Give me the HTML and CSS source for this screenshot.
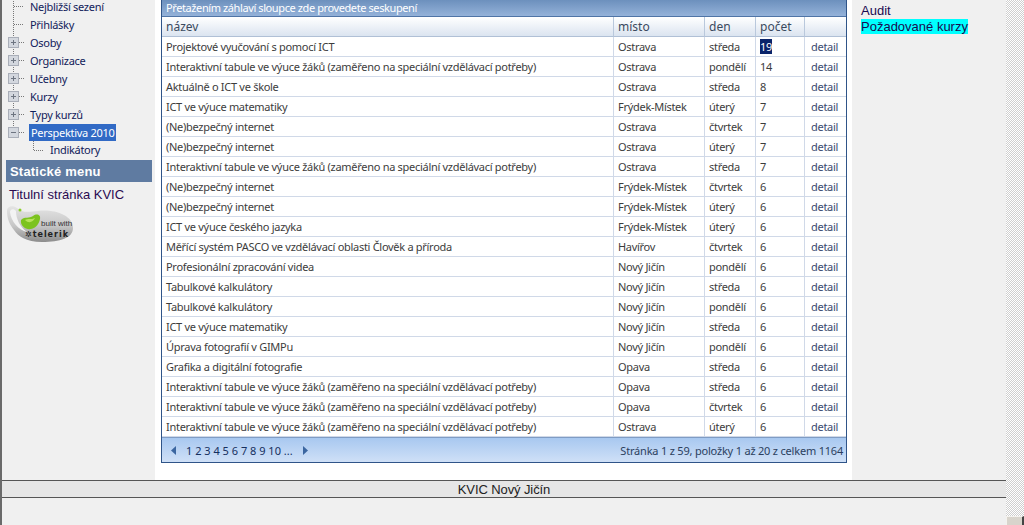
FILE: index.html
```html
<!DOCTYPE html>
<html lang="cs">
  <head>
    <meta charset="UTF-8" />
    <meta name="viewport" content="width=device-width, initial-scale=1.0" />
    <title>KVIC Nový Jičín</title>
    <link rel="stylesheet" href="styles.css">
  </head>
  <body>
    <div class="page">
      <div class="content">
        <div class="columns">
          <div class="sidebar">
            <ul class="tree">
              <li><svg class="joint" width="30" height="18"><path class="dots" d="M13.5 0V18M14 9.5H24"/></svg>Nejbližší sezení</li>
              <li><svg class="joint" width="30" height="18"><path class="dots" d="M13.5 0V18M14 9.5H24"/></svg>Přihlášky</li>
              <li><svg class="joint" width="30" height="18"><path class="dots" d="M13.5 0V18M19 9.5H24"/><rect class="box" x="8.5" y="4.5" width="10" height="10"/><path class="sign" d="M11 9.5H16M13.5 7V12"/></svg>Osoby</li>
              <li><svg class="joint" width="30" height="18"><path class="dots" d="M13.5 0V18M19 9.5H24"/><rect class="box" x="8.5" y="4.5" width="10" height="10"/><path class="sign" d="M11 9.5H16M13.5 7V12"/></svg>Organizace</li>
              <li><svg class="joint" width="30" height="18"><path class="dots" d="M13.5 0V18M19 9.5H24"/><rect class="box" x="8.5" y="4.5" width="10" height="10"/><path class="sign" d="M11 9.5H16M13.5 7V12"/></svg>Učebny</li>
              <li><svg class="joint" width="30" height="18"><path class="dots" d="M13.5 0V18M19 9.5H24"/><rect class="box" x="8.5" y="4.5" width="10" height="10"/><path class="sign" d="M11 9.5H16M13.5 7V12"/></svg>Kurzy</li>
              <li><svg class="joint" width="30" height="18"><path class="dots" d="M13.5 0V18M19 9.5H24"/><rect class="box" x="8.5" y="4.5" width="10" height="10"/><path class="sign" d="M11 9.5H16M13.5 7V12"/></svg>Typy kurzů</li>
              <li><svg class="joint" width="30" height="18"><path class="dots" d="M13.5 0V5M19 9.5H24"/><rect class="box" x="8.5" y="4.5" width="10" height="10"/><path class="sign" d="M11 9.5H16"/></svg><span class="selected">Perspektiva 2010</span></li>
              <li class="child"><svg class="joint" width="50" height="18"><path class="dots" d="M33.5 0V9M34 9.5H44"/></svg>Indikátory</li>
            </ul>
            <div class="menu-title">Statické menu</div>
            <div class="menu-link">Titulní stránka KVIC</div>
            <svg class="telerik" width="70" height="38" viewBox="0 0 70 38">
              <defs>
                <linearGradient id="drop" x1="0" y1="0" x2="0" y2="1">
                  <stop offset="0" stop-color="#e4e4e4"/>
                  <stop offset="0.55" stop-color="#c6c6c6"/>
                  <stop offset="1" stop-color="#8c8c8c"/>
                </linearGradient>
              </defs>
              <path fill="url(#drop)" d="M1 6C1 1 7 0 11 3C16 8 22 7 32 6C48 4 67 10 67 23C67 33 54 37 36 37C20 37 12 31 8 25C4 20 1 14 1 6Z"/>
              <path fill="#f3f3f3" d="M4 7C4 4 8 3 10 6C10 14 14 22 21 27C13 25 5 17 4 7Z"/>
              <path fill="#7cc31f" d="M15 15C19 11 23 14 27 11C31 8 35 10 34 14C33 19 30 23 25 24C20 25 14 21 15 15Z"/>
              <path fill="#b7e35a" d="M19 15C22 13 25 15 29 13C27 17 23 19 19 15Z"/>
              <circle cx="14" cy="5" r="1.5" fill="#8ccf2a"/>
              <text class="built" x="35" y="21">built with</text>
              <text class="brand" x="19" y="32" textLength="43">✲telerik</text>
            </svg>
          </div>

          <div class="main">
            <div class="grid">
              <div class="group-bar">Přetažením záhlaví sloupce zde provedete seskupení</div>
              <table>
                <colgroup>
                  <col class="col-name" /><col class="col-place" /><col class="col-day" /><col class="col-count" /><col class="col-link" />
                </colgroup>
                <thead>
                  <tr><th>název</th><th>místo</th><th>den</th><th>počet</th><th></th></tr>
                </thead>
                <tbody>
                  <tr><td>Projektové vyučování s pomocí ICT</td><td>Ostrava</td><td>středa</td><td><span class="picked">19</span></td><td class="link">detail</td></tr>
                  <tr><td>Interaktivní tabule ve výuce žáků (zaměřeno na speciální vzdělávací potřeby)</td><td>Ostrava</td><td>pondělí</td><td>14</td><td class="link">detail</td></tr>
                  <tr><td>Aktuálně o ICT ve škole</td><td>Ostrava</td><td>středa</td><td>8</td><td class="link">detail</td></tr>
                  <tr><td>ICT ve výuce matematiky</td><td>Frýdek-Místek</td><td>úterý</td><td>7</td><td class="link">detail</td></tr>
                  <tr><td>(Ne)bezpečný internet</td><td>Ostrava</td><td>čtvrtek</td><td>7</td><td class="link">detail</td></tr>
                  <tr><td>(Ne)bezpečný internet</td><td>Ostrava</td><td>úterý</td><td>7</td><td class="link">detail</td></tr>
                  <tr><td>Interaktivní tabule ve výuce žáků (zaměřeno na speciální vzdělávací potřeby)</td><td>Ostrava</td><td>středa</td><td>7</td><td class="link">detail</td></tr>
                  <tr><td>(Ne)bezpečný internet</td><td>Frýdek-Místek</td><td>čtvrtek</td><td>6</td><td class="link">detail</td></tr>
                  <tr><td>(Ne)bezpečný internet</td><td>Frýdek-Místek</td><td>úterý</td><td>6</td><td class="link">detail</td></tr>
                  <tr><td>ICT ve výuce českého jazyka</td><td>Frýdek-Místek</td><td>úterý</td><td>6</td><td class="link">detail</td></tr>
                  <tr><td>Měřící systém PASCO ve vzdělávací oblasti Člověk a příroda</td><td>Havířov</td><td>čtvrtek</td><td>6</td><td class="link">detail</td></tr>
                  <tr><td>Profesionální zpracování videa</td><td>Nový Jičín</td><td>pondělí</td><td>6</td><td class="link">detail</td></tr>
                  <tr><td>Tabulkové kalkulátory</td><td>Nový Jičín</td><td>středa</td><td>6</td><td class="link">detail</td></tr>
                  <tr><td>Tabulkové kalkulátory</td><td>Nový Jičín</td><td>pondělí</td><td>6</td><td class="link">detail</td></tr>
                  <tr><td>ICT ve výuce matematiky</td><td>Nový Jičín</td><td>středa</td><td>6</td><td class="link">detail</td></tr>
                  <tr><td>Úprava fotografií v GIMPu</td><td>Nový Jičín</td><td>pondělí</td><td>6</td><td class="link">detail</td></tr>
                  <tr><td>Grafika a digitální fotografie</td><td>Opava</td><td>středa</td><td>6</td><td class="link">detail</td></tr>
                  <tr><td>Interaktivní tabule ve výuce žáků (zaměřeno na speciální vzdělávací potřeby)</td><td>Opava</td><td>středa</td><td>6</td><td class="link">detail</td></tr>
                  <tr><td>Interaktivní tabule ve výuce žáků (zaměřeno na speciální vzdělávací potřeby)</td><td>Opava</td><td>čtvrtek</td><td>6</td><td class="link">detail</td></tr>
                  <tr><td>Interaktivní tabule ve výuce žáků (zaměřeno na speciální vzdělávací potřeby)</td><td>Ostrava</td><td>úterý</td><td>6</td><td class="link">detail</td></tr>
                </tbody>
              </table>
              <div class="pager">
                <div class="pages">
                  <svg width="7" height="9"><path class="arrow" d="M6 0V9L1 4.5Z"/></svg>
                  <span class="numbers">1 2 3 4 5 6 7 8 9 10 ...</span>
                  <svg width="7" height="9"><path class="arrow" d="M1 0V9L6 4.5Z"/></svg>
                </div>
                <div class="info">Stránka 1 z 59, položky 1 až 20 z celkem 1164</div>
              </div>
            </div>
          </div>

          <div class="aside">
            <div>Audit</div>
            <div><span class="marked">Požadované kurzy</span></div>
          </div>
        </div>

        <div class="footer">KVIC Nový Jičín</div>
      </div>

      <div class="scrollbar"><div class="thumb"></div></div>
    </div>
  </body>
</html>
```

FILE: styles.css
```css
html,
body {
  margin: 0;
  height: 525px;
  overflow: hidden;
}

body {
  background: #f0f0f0;
  font-family: "Noto Sans", Tahoma, sans-serif;
  font-size: 11px;
  letter-spacing: -0.29px;
  color: #3c3c3c;
}

.page {
  display: flex;
  height: 525px;
}

.content {
  flex: 1;
  display: flex;
  flex-direction: column;
  border-left: 2px solid #6a6a6a;
  min-width: 0;
}

.columns {
  display: flex;
  height: 480px;
}

/* left tree */
.sidebar {
  width: 153px;
  flex: none;
}

.tree {
  list-style: none;
  margin: -3px 0 0;
  padding: 0;
  height: 163px;
  color: #10205a;
}

.tree li {
  display: flex;
  align-items: center;
  height: 18px;
  margin-left: -2px;
  white-space: nowrap;
}

.tree .child {
  height: 17px;
}

.joint {
  flex: none;
}

.dots {
  fill: none;
  stroke: #777;
  stroke-dasharray: 1 1;
}

.box {
  fill: #d3d7de;
  stroke: #a9aeb8;
}

.sign {
  fill: none;
  stroke: #6d7480;
}

.selected {
  background: #316ac5;
  color: #fff;
  padding: 1px 2px;
  margin-left: -1px;
}

.menu-title {
  margin: 0 0 0 4px;
  width: 146px;
  height: 22px;
  box-sizing: border-box;
  padding-left: 4px;
  line-height: 23px;
  background: #5f7ba1;
  color: #fff;
  font-family: "Liberation Sans", Arial, sans-serif;
  font-size: 13px;
  font-weight: bold;
  letter-spacing: 0.2px;
}

.menu-link {
  margin: 5px 0 0 7px;
  font-family: "Liberation Sans", Arial, sans-serif;
  font-size: 13px;
  letter-spacing: 0;
  line-height: 16px;
  color: #2a0a50;
  white-space: nowrap;
}

.telerik {
  display: block;
  margin: 2px 0 0 4px;
}

.built {
  font-family: "Liberation Sans", Arial, sans-serif;
  font-size: 8px;
  letter-spacing: 0;
  fill: #333;
}

.brand {
  font-family: "DejaVu Sans", sans-serif;
  font-size: 8px;
  font-weight: bold;
  letter-spacing: 0;
  fill: #222;
}

/* grid */
.main {
  width: 697px;
  flex: none;
  background: #fff;
  padding-left: 6px;
  box-sizing: border-box;
}

.grid {
  width: 686px;
  box-sizing: border-box;
  border: 1px solid #2f5488;
  border-top: none;
  height: 463px;
}

.group-bar {
  height: 16px;
  line-height: 15px;
  padding-left: 4px;
  background: linear-gradient(#6c90bd, #94b2d9);
  color: #fff;
  letter-spacing: -0.4px;
  border-bottom: 1px solid #4f74a6;
}

table {
  width: 684px;
  table-layout: fixed;
  border-collapse: separate;
  border-spacing: 0;
}

.col-name {
  width: 452px;
}

.col-place {
  width: 91px;
}

.col-day {
  width: 51px;
}

.col-count {
  width: 49px;
}

th {
  height: 20px;
  padding: 0 0 0 4px;
  box-sizing: border-box;
  text-align: left;
  font-weight: normal;
  font-size: 12px;
  letter-spacing: 0;
  color: #3a4a5e;
  background: linear-gradient(#fff, #dbe4f0);
  border-right: 1px solid #b9c8dc;
  border-bottom: 1px solid #b0c0d6;
}

td {
  height: 20px;
  padding: 0 0 0 4px;
  box-sizing: border-box;
  background: #fff;
  border-right: 1px solid #d0d9e8;
  border-bottom: 1px solid #d0d9e8;
  white-space: nowrap;
  overflow: hidden;
}

th:last-child,
td:last-child {
  border-right: none;
}

.link {
  padding-left: 6px;
  color: #3a4a70;
}

.picked {
  background: #0a246a;
  color: #fff;
}

.pager {
  display: flex;
  justify-content: space-between;
  align-items: center;
  height: 25px;
  padding: 0 3px 0 8px;
  background: linear-gradient(#a8c8f0, #cfe0f7);
  border-top: 1px solid #7f9cc4;
  box-sizing: border-box;
  color: #2c3f5e;
}

.pages {
  display: flex;
  align-items: center;
}

.numbers {
  margin: 0 9px 0 9px;
  letter-spacing: 0;
  color: #152f5e;
}

.info {
  letter-spacing: -0.2px;
}

.arrow {
  fill: #3b66a0;
}

/* right column */
.aside {
  flex: 1;
  padding: 3px 0 0 9px;
  font-family: "Liberation Sans", Arial, sans-serif;
  font-size: 13px;
  letter-spacing: 0;
  line-height: 16px;
  color: #1a0a50;
}

.marked {
  background: #00ffff;
}

.footer {
  flex: none;
  height: 18px;
  box-sizing: border-box;
  background: #e6e6e6;
  border-top: 1px solid #555;
  border-bottom: 1px solid #555;
  text-align: center;
  font-family: "Liberation Sans", Arial, sans-serif;
  font-size: 13px;
  letter-spacing: -0.1px;
  line-height: 17px;
  color: #222;
}

.scrollbar {
  position: relative;
  width: 18px;
  flex: none;
  background: repeating-conic-gradient(#cfcfcf 0 25%, #fff 0 50%) 0 0 / 2px 2px;
}

.thumb {
  position: absolute;
  left: 0;
  right: 0;
  bottom: 0;
  height: 9px;
  background: #d8d4cc;
  border-top: 1px solid #f4f2ee;
  border-left: 1px solid #f4f2ee;
  border-right: 2px solid #444;
  box-sizing: border-box;
}
```
